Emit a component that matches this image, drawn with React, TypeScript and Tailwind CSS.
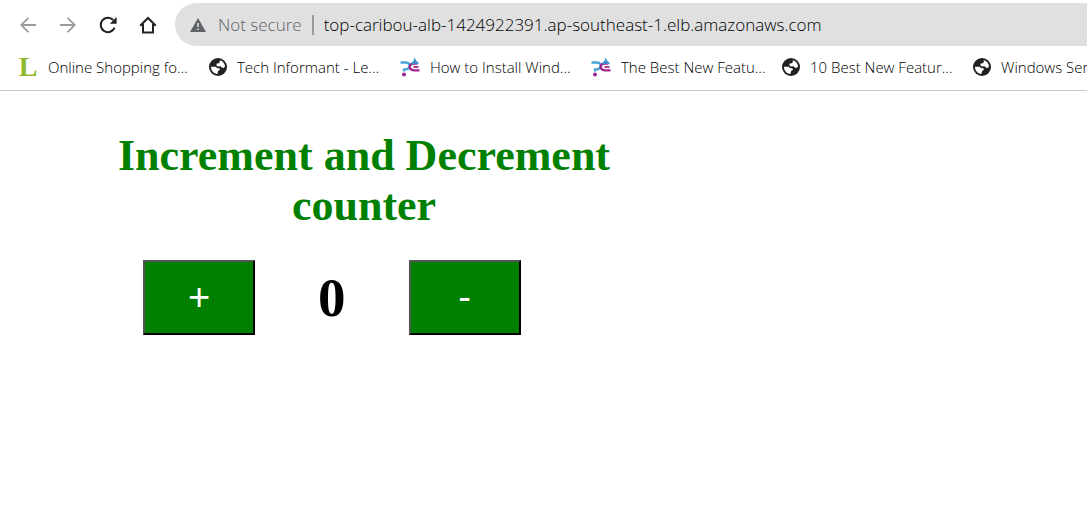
import { useState } from "react";

function BackIcon({ flip = false }: { flip?: boolean }) {
  return (
    <svg viewBox="0 0 16 16" className={flip ? "size-4 rotate-180" : "size-4"} fill="none" stroke="#9b9b9b" strokeWidth="1.8" aria-hidden="true">
      <path d="M16 8H1.4M8.4 .8 1.2 8l7.2 7.2" />
    </svg>
  );
}

function ReloadIcon() {
  return (
    <svg viewBox="0 0 18 18" className="size-[18px]" aria-hidden="true">
      <path d="M15.6 11.6A7.2 7.2 0 1 1 14.2 4" fill="none" stroke="#202124" strokeWidth="2" />
      <path d="M17.6 1v6.8h-6.8z" fill="#202124" />
    </svg>
  );
}

function HomeIcon() {
  return (
    <svg viewBox="0 0 18 18" className="size-[18px]" fill="none" stroke="#202124" strokeWidth="2" aria-hidden="true">
      <path d="M1.2 9.8 9 2l7.8 7.8M4 8v8.5h10V8" />
    </svg>
  );
}

function WarningIcon() {
  return (
    <svg viewBox="0 0 16 14" className="h-3.5 w-4 shrink-0" aria-hidden="true">
      <path d="M8 0 16 14H0z" fill="#5f6368" />
      <path d="M7.2 5h1.6v4H7.2zM7.2 10.4h1.6V12H7.2z" fill="#e0e0e0" />
    </svg>
  );
}

function LetterIcon() {
  return (
    <span aria-hidden="true" className="flex size-5 shrink-0 items-center justify-center font-['Liberation_Serif',serif] text-[28px] leading-5 font-bold text-[#8fb92c]">
      L
    </span>
  );
}

function GlobeIcon() {
  return (
    <svg viewBox="0 0 18 18" className="size-[18px] shrink-0" aria-hidden="true">
      <circle cx="9" cy="9" r="9" fill="#202124" />
      <path d="M10.8 2.2c2.9.7 5.1 3.2 5.2 6.3l-1.3 1.4-2-.3-1-1.3-3 .2-1.4-1.4.5-1.5 2.1-.3.9-1.2z" fill="#fff" />
      <path d="M2 8.7h4.6l1.8 1.5h2l.6 1.5-1.9 1.4-.7 2.9C4.8 15.8 2 12.8 2 9z" fill="#fff" />
    </svg>
  );
}

function SwirlIcon() {
  return (
    <svg viewBox="0 0 20 20" className="size-5 shrink-0" fill="none" aria-hidden="true">
      <path d="M.5 5.5h5c3.500 0 4.500 2 4 4s-2.500 3-5.500 3v2" stroke="#45a5d8" strokeWidth="2.3" />
      <path d="M19.500 13.300h-5.500c-3 0-4.500-1.800-4.300-3.800.2-1.800 1.800-3 4.300-3h3" stroke="#a3238e" strokeWidth="2.3" />
      <path d="M13.500 10h5" stroke="#a3238e" strokeWidth="1.800" />
      <path d="M14.500 .5 16.500 4l2 1.500v2l-4-1-3.500 1.500v-2l2.500-2z" fill="#3a93cf" />
      <circle cx="4" cy="17.500" r="2" fill="#a3238e" />
    </svg>
  );
}

const icons = { letter: LetterIcon, globe: GlobeIcon, swirl: SwirlIcon };

const bookmarks: { icon: keyof typeof icons; label: string }[] = [
  { icon: "letter", label: "Online Shopping fo..." },
  { icon: "globe", label: "Tech Informant - Le..." },
  { icon: "swirl", label: "How to Install Wind..." },
  { icon: "swirl", label: "The Best New Featu..." },
  { icon: "globe", label: "10 Best New Featur..." },
  { icon: "globe", label: "Windows Server..." },
];

const counterButton =
  "h-[75px] w-28 border-2 border-t-[#555] border-l-[#555] border-r-black border-b-black bg-[#008000] pb-0.5 font-['Liberation_Sans',sans-serif] text-[38px] leading-none text-white";

export default function App() {
  const [count, setCount] = useState(0);

  return (
    <div className="min-h-screen overflow-x-hidden bg-white font-['Open_Sans',sans-serif] text-[#202124]">
      <header className="border-b border-[#cbcbcb]">
        <div className="flex items-center pt-[3px] pl-[18px]">
          <nav aria-label="Navigation" className="flex shrink-0 gap-5 pr-[17px]">
            <button type="button" aria-label="Back" className="flex size-5 items-center justify-center"><BackIcon /></button>
            <button type="button" aria-label="Forward" className="flex size-5 items-center justify-center"><BackIcon flip /></button>
            <button type="button" aria-label="Reload" className="flex size-5 items-center justify-center"><ReloadIcon /></button>
            <button type="button" aria-label="Home" className="flex size-5 items-center justify-center"><HomeIcon /></button>
          </nav>
          <div className="flex h-[43px] min-w-0 flex-1 items-center rounded-l-full bg-[#e0e0e0] pl-[15px] text-[17px] font-[340]">
            <WarningIcon />
            <span className="ml-3 shrink-0 text-[#5f6368]">Not secure</span>
            <span className="mx-[10px] h-5 w-0.5 shrink-0 bg-[#9a9a9a]" />
            <input
              aria-label="Address"
              className="min-w-0 flex-1 bg-transparent text-black outline-none"
              defaultValue="top-caribou-alb-1424922391.ap-southeast-1.elb.amazonaws.com"
            />
          </div>
        </div>
        <nav aria-label="Bookmarks" className="flex h-11 items-center gap-5 overflow-hidden pb-0.5 pl-[18px] text-[15px] font-light text-black">
          {bookmarks.map(({ icon, label }) => {
            const Icon = icons[icon];
            return (
              <a key={label} href="#" className="flex w-[171px] shrink-0 items-center gap-2.5 whitespace-nowrap">
                <Icon />
                {label}
              </a>
            );
          })}
        </nav>
      </header>
      <main className="px-[114px] pt-10 font-['Liberation_Serif',serif]">
        <h1 className="max-w-[500px] text-center text-[44px] leading-[50px] font-bold text-[#008000]">
          Increment and Decrement counter
        </h1>
        <div className="mt-[29px] flex items-center gap-[63px] pl-[29px]">
          <button type="button" aria-label="Increment" className={counterButton} onClick={() => setCount(count + 1)}>+</button>
          <output className="text-[55px] leading-none font-bold text-black">{count}</output>
          <button type="button" aria-label="Decrement" className={counterButton} onClick={() => setCount(count - 1)}>-</button>
        </div>
      </main>
    </div>
  );
}
